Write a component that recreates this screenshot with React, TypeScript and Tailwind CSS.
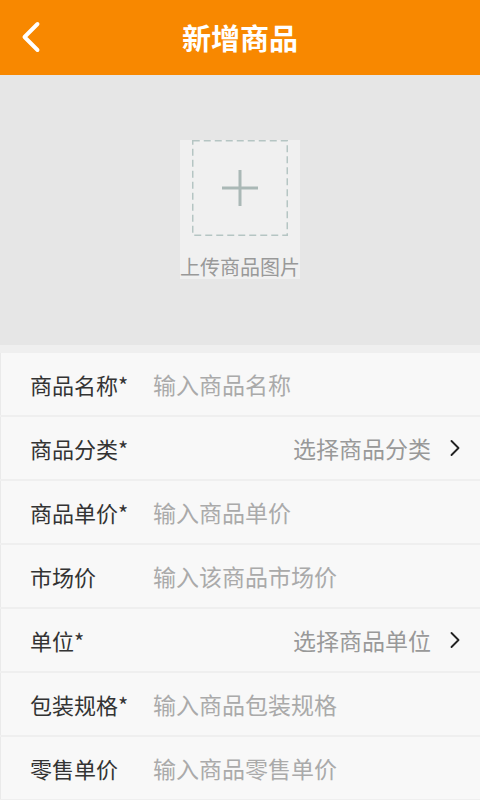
import { ChevronLeft, ChevronRight } from 'lucide-react';

const fields = [
  { label: '商品名称', required: true, placeholder: '输入商品名称' },
  { label: '商品分类', required: true, select: '选择商品分类' },
  { label: '商品单价', required: true, placeholder: '输入商品单价' },
  { label: '市场价', required: false, placeholder: '输入该商品市场价' },
  { label: '单位', required: true, select: '选择商品单位' },
  { label: '包装规格', required: true, placeholder: '输入商品包装规格' },
  { label: '零售单价', required: false, placeholder: '输入商品零售单价' },
];

export default function App() {
  return (
    <div
      className="h-[800px] w-[480px] overflow-hidden bg-[#efefef]"
      style={{ fontFamily: '"Noto Sans CJK SC", "Noto Sans", sans-serif' }}
    >
      <header className="relative flex h-[75px] items-center justify-center bg-[#f88800]">
        <ChevronLeft className="absolute left-[5px] top-[11px] text-white" size={52} strokeWidth={1.8} />
        <h1 className="text-[29px] font-bold text-white">新增商品</h1>
      </header>

      <section className="flex h-[270px] items-start justify-center bg-[#e6e6e6] pt-[65px]">
        <div className="flex w-[120px] flex-col items-center bg-[#f0f0f0]">
          <svg width="96" height="96" viewBox="0 0 96 96">
            <rect x="0.75" y="0.75" width="94.5" height="94.5" fill="none" stroke="#b5c5c3" strokeWidth="1.5" strokeDasharray="7 4" />
            <path d="M48 30V66M30 48H66" stroke="#aab8b6" strokeWidth="3" />
          </svg>
          <span className="mt-[19px] text-[20px] leading-[24px] text-[#999]">上传商品图片</span>
        </div>
      </section>

      <ul className="mt-[8px] flex flex-col gap-[2px]">
        {fields.map((f) => (
          <li key={f.label} className="flex h-[62px] items-center border-l border-[#eaeaea] bg-[#f8f8f8] pl-[29px] pr-[11px]">
            <span className="w-[123px] text-[22px] text-[#333]">
              {f.label}
              {f.required && '*'}
            </span>
            {f.select ? (
              <div className="ml-auto flex items-center gap-[10px]">
                <span className="text-[23px] text-[#999]">{f.select}</span>
                <ChevronRight className="text-[#222]" size={28} strokeWidth={1.6} />
              </div>
            ) : (
              <span className="text-[23px] text-[#aaa]">{f.placeholder}</span>
            )}
          </li>
        ))}
      </ul>
    </div>
  );
}
